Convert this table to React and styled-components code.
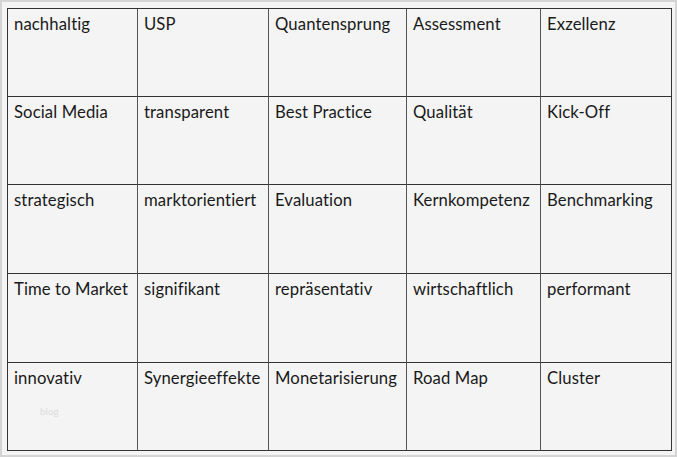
import React from 'react'
import styled, { createGlobalStyle } from 'styled-components'

const words = [
  ['nachhaltig', 'USP', 'Quantensprung', 'Assessment', 'Exzellenz'],
  ['Social Media', 'transparent', 'Best Practice', 'Qualität', 'Kick-Off'],
  ['strategisch', 'marktorientiert', 'Evaluation', 'Kernkompetenz', 'Benchmarking'],
  ['Time to Market', 'signifikant', 'repräsentativ', 'wirtschaftlich', 'performant'],
  ['innovativ', 'Synergieeffekte', 'Monetarisierung', 'Road Map', 'Cluster'],
]

const GlobalStyle = createGlobalStyle`
  html, body {
    margin: 0;
    padding: 0;
    background: #f4f4f4;
  }
`

const Frame = styled.div`
  box-sizing: border-box;
  width: 677px;
  height: 457px;
  border: 2px solid #d4d4d4;
  background: #f4f4f4;
  padding: 6px 0 0 5px;
  position: relative;
  font-family: Lato, "Liberation Sans", sans-serif;
`

const Grid = styled.div`
  display: grid;
  grid-template-columns: 130px 131px 138px 134px 131px;
  grid-template-rows: 88px 88px 89px 89px 88px;
  border-left: 1px solid #333;
  border-top: 1px solid #333;
  width: max-content;
`

const Cell = styled.div`
  box-sizing: border-box;
  border-right: 1px solid ${p => (p.$last ? '#333' : '#555')};
  border-bottom: 1px solid #333;
  padding: 6px 0 0 6px;
  font-size: 16.7px;
  line-height: 19px;
  font-variant-ligatures: none;
  letter-spacing: 0.1px;
  color: #1a1a1a;
  white-space: nowrap;
  overflow: hidden;
`

const Watermark = styled.span`
  position: absolute;
  left: 38px;
  top: 403px;
  font-size: 10px;
  color: #dcdcdc;
`

export default function App() {
  return (
    <>
      <GlobalStyle />
      <Frame>
        <Grid>
          {words.flat().map((w, i) => (
            <Cell key={i} $last={i % 5 === 4}>{w}</Cell>
          ))}
        </Grid>
        <Watermark>blog</Watermark>
      </Frame>
    </>
  )
}
